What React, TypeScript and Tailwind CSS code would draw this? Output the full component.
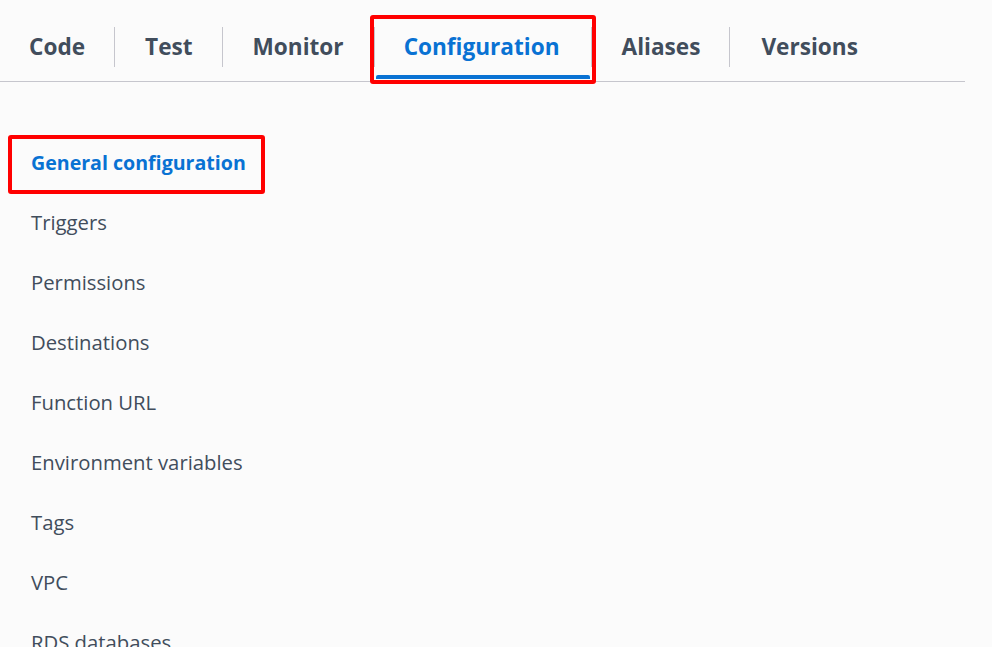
import React from "react";

const tabs: { label: string; pad: string }[] = [
  { label: "Code", pad: "pl-[29px] pr-[29px]" },
  { label: "Test", pad: "pl-[30px] pr-[29px]" },
  { label: "Monitor", pad: "px-[30px]" },
  { label: "Configuration", pad: "pl-[29px] pr-[31px]" },
  { label: "Aliases", pad: "pl-[30px] pr-[29px]" },
  { label: "Versions", pad: "px-[31px]" },
];
const items = [
  "General configuration",
  "Triggers",
  "Permissions",
  "Destinations",
  "Function URL",
  "Environment variables",
  "Tags",
  "VPC",
  "RDS databases",
];

export default function App() {
  return (
    <div
      className="w-[992px] h-[647px] overflow-hidden bg-[#fbfbfb] text-[#414d5c]"
      style={{ fontFamily: '"Open Sans", "Noto Sans", sans-serif' }}
    >
      <div className="w-[965px] border-b border-[#c6c6cd] flex items-start h-[82px]">
        {tabs.map((t, i) => {
          const active = t.label === "Configuration";
          return (
            <React.Fragment key={t.label}>
              {i > 0 && <div className="w-px h-[40px] mt-[27px] bg-[#c6c6cd] shrink-0" />}
              <div
                className={
                  "relative h-[81px] pt-[12px] flex items-center text-[22.6px] font-bold leading-[30px] " +
                  t.pad +
                  (active ? " text-[#0972d3]" : "")
                }
              >
                {t.label}
                {active && (
                  <>
                    <span className="absolute left-[1px] right-[1px] bottom-[2px] h-[4px] bg-[#0972d3] rounded-t-[2px]" />
                    <span className="absolute -left-[5px] -right-[5px] top-[15px] -bottom-[3px] border-[4px] border-[#ff0000] rounded-[3px]" />
                  </>
                )}
              </div>
            </React.Fragment>
          );
        })}
      </div>
      <ul className="pt-[51px]">
        {items.map((it, i) => (
          <li key={it} className="h-[60px] flex items-center pl-[31px]">
            {i === 0 ? (
              <span className="relative text-[19.6px] font-bold leading-[28px] text-[#0972d3]">
                {it}
                <span className="absolute -left-[23px] -right-[19px] -top-[14px] -bottom-[17px] border-[4px] border-[#ff0000] rounded-[3px]" />
              </span>
            ) : (
              <span className="text-[20.3px] leading-[26px] pb-[2px]">{it}</span>
            )}
          </li>
        ))}
      </ul>
    </div>
  );
}
